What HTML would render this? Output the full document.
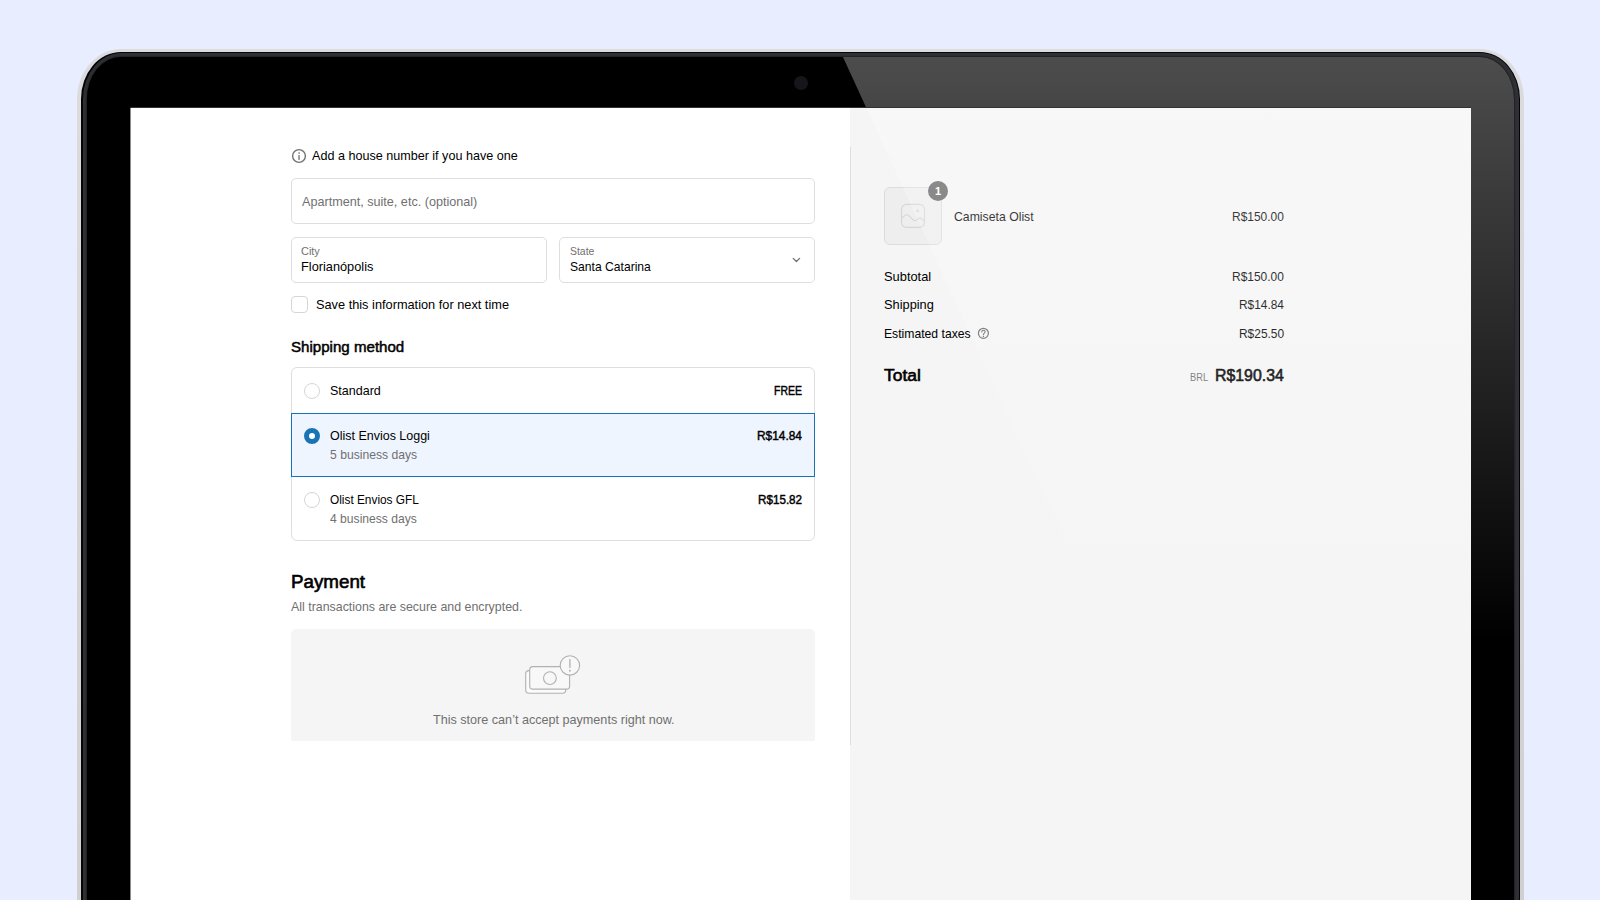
<!DOCTYPE html>
<html lang="en">
<head>
<meta charset="utf-8">
<title>Checkout</title>
<style>
*{box-sizing:border-box;margin:0;padding:0}
html,body{width:1600px;height:900px;overflow:hidden;background:#e8eeff;font-family:"Liberation Sans",sans-serif;color:#000}
.abs{position:absolute}
#laptop{position:absolute;left:77px;top:49px;width:1447px;height:900px;border-radius:44px 44px 0 0 / 50px 50px 0 0;background:linear-gradient(180deg,#dcdcde 0,#cfcfd2 100%);overflow:hidden}
#rim1{position:absolute;left:4px;top:3px;right:4px;bottom:-50px;border-radius:40px 40px 0 0 / 47px 47px 0 0;background:#050506}
#rim2{position:absolute;left:5.5px;top:4.2px;right:5.5px;bottom:-50px;border-radius:38.5px 38.5px 0 0 / 46px 46px 0 0;background:#2e3035}
#bezel{position:absolute;left:10px;top:8px;right:10px;bottom:-50px;border-radius:34px 34px 0 0 / 42px 42px 0 0;background:#000;box-shadow:0 0 2px 0 #000}
#cam{position:absolute;left:716.5px;top:27px;width:14px;height:14px;border-radius:50%;background:#15151a}
#screen{position:absolute;left:130px;top:107px;width:1341px;height:793px;background:#fff;overflow:hidden}
#side{position:absolute;left:720px;top:0;width:621px;height:793px;background:#f5f5f5}
#divider{position:absolute;left:720px;top:40px;width:1px;height:598px;background:#dedede}
.t{position:absolute;white-space:nowrap;line-height:1}

.fld{position:absolute;border:1px solid #dedede;border-radius:5px;background:#fff}
.g{color:#707070}
.b{font-weight:400;-webkit-text-stroke:0.45px currentColor}
.b2{-webkit-text-stroke:0.6px currentColor}
.radio{position:absolute;width:16px;height:16px;border-radius:50%;border:1px solid #d6d6d6;background:#fff}
</style>
</head>
<body>
<div id="laptop">
  <div id="rim1"></div><div id="rim2"></div><div id="bezel"></div>
  <div id="cam"></div>
</div>
<div id="screen">
  <div id="side"></div>
  <div class="abs" style="left:0;top:0;width:1341px;height:1px;background:rgba(0,0,0,.8);z-index:5"></div>
  <div class="abs" style="left:0;top:0;width:1px;height:793px;background:rgba(0,0,0,.45);z-index:5"></div>
  <div id="divider"></div>

  <!-- left column (coords relative to screen: x-130, y-107) -->
  <div class="t" id="t_add" style="left:182.05px;top:43.25px;font-size:12.7px;transform-origin:0 50%;transform:scaleX(0.9918)">Add a house number if you have one</div>
  <div class="fld" style="left:161px;top:71px;width:524px;height:46px"></div>
  <div class="t g" id="t_apt" style="left:171.88px;top:89.25px;font-size:12.7px;transform-origin:0 50%;transform:scaleX(0.9944)">Apartment, suite, etc. (optional)</div>
  <div class="fld" style="left:161px;top:130px;width:256px;height:46px"></div>
  <div class="t g" id="t_cityl" style="left:171.37px;top:139.03px;font-size:10.6px;transform-origin:0 50%;transform:scaleX(1.0305)">City</div>
  <div class="t" id="t_city" style="left:171.16px;top:154.25px;font-size:12.7px;transform-origin:0 50%;transform:scaleX(1.0060)">Florianópolis</div>
  <div class="fld" style="left:429px;top:130px;width:256px;height:46px"></div>
  <div class="t g" id="t_statel" style="left:439.88px;top:139.03px;font-size:10.6px;transform-origin:0 50%;transform:scaleX(0.9853)">State</div>
  <div class="t" id="t_state" style="left:439.50px;top:154.25px;font-size:12.7px;transform-origin:0 50%;transform:scaleX(0.9552)">Santa Catarina</div>
  <div class="abs" style="left:161px;top:189px;width:17px;height:17px;border:1px solid #d6d6d6;border-radius:4px;background:#fff"></div>
  <div class="t" id="t_save" style="left:186.06px;top:192.25px;font-size:12.7px;transform-origin:0 50%;transform:scaleX(1.0061)">Save this information for next time</div>

  <div class="t b" id="t_shipm" style="left:160.83px;top:234.32px;font-size:13.8px;transform-origin:0 50%;transform:scaleX(1.0937)">Shipping method</div>
  <div class="abs" style="left:161px;top:260px;width:524px;height:174px;border:1px solid #dedede;border-radius:6px;background:#fff"></div>
  <div class="abs" style="left:161px;top:306px;width:524px;height:64px;border:1px solid #1974b6;background:#eff5ff"></div>
  <div class="radio" style="left:174px;top:276px"></div>
  <div class="t" id="t_std" style="left:199.73px;top:278.25px;font-size:12.7px;transform-origin:0 50%;transform:scaleX(0.9866)">Standard</div>
  <div class="t b" id="t_free" style="left:644.31px;top:277.50px;font-size:12.4px;transform-origin:0 50%;transform:scaleX(0.8427)">FREE</div>
  <div class="radio" style="left:173.5px;top:320.5px;width:16.6px;height:16.6px;border:5px solid #1974b6"></div>
  <div class="t" id="t_loggi" style="left:200.13px;top:323.25px;font-size:12.7px;transform-origin:0 50%;transform:scaleX(0.9837)">Olist Envios Loggi</div>
  <div class="t g" id="t_5d" style="left:199.59px;top:342.25px;font-size:12.7px;transform-origin:0 50%;transform:scaleX(0.9583)">5 business days</div>
  <div class="t b" id="t_p1" style="left:626.84px;top:323.25px;font-size:12.7px;transform-origin:0 50%;transform:scaleX(0.9369)">R$14.84</div>
  <div class="radio" style="left:174px;top:385px"></div>
  <div class="t" id="t_gfl" style="left:200.19px;top:387.25px;font-size:12.7px;transform-origin:0 50%;transform:scaleX(0.9333)">Olist Envios GFL</div>
  <div class="t g" id="t_4d" style="left:199.97px;top:406.25px;font-size:12.7px;transform-origin:0 50%;transform:scaleX(0.9545)">4 business days</div>
  <div class="t b" id="t_p2" style="left:627.53px;top:387.25px;font-size:12.7px;transform-origin:0 50%;transform:scaleX(0.9191)">R$15.82</div>

  <div class="t b b2" id="t_pay" style="left:161.17px;top:466.85px;font-size:17.9px;transform-origin:0 50%;transform:scaleX(1.0484)">Payment</div>
  <div class="t g" id="t_all" style="left:160.91px;top:494.25px;font-size:12.7px;transform-origin:0 50%;transform:scaleX(0.9763)">All transactions are secure and encrypted.</div>
  <div class="abs" style="left:161px;top:522px;width:524px;height:112px;background:#f5f5f5;border-radius:5px 5px 2px 2px"></div>
  <div class="t g" id="t_cant" style="left:303.22px;top:607.25px;font-size:12.7px;transform-origin:0 50%;transform:scaleX(0.9931)">This store can’t accept payments right now.</div>


  <div class="abs" style="left:754px;top:80px;width:58px;height:58px;border:1px solid #dcdce0;border-radius:6px;background:#eee"></div>
  <!-- icon overlay in page coordinates -->
  <svg class="abs" style="left:-130px;top:-107px" width="1600" height="900" viewBox="0 0 1600 900" fill="none">
    <!-- info -->
    <circle cx="299" cy="156" r="6.4" stroke="#717171" stroke-width="1.4"/>
    <rect x="298.3" y="152.3" width="1.5" height="1.5" fill="#808080"/>
    <rect x="298.3" y="155.1" width="1.5" height="4.8" fill="#808080"/>
    <!-- chevron -->
    <path d="M793.2 258.4 L796.4 261.5 L799.6 258.4" stroke="#707070" stroke-width="1.3" stroke-linecap="round" stroke-linejoin="round"/>
    <!-- payment icon -->
    <g stroke="#b1b1b3" stroke-width="1.1">
      <rect x="525.7" y="670.6" width="40" height="22.7" rx="3.2" fill="#fbfbfb"/>
      <rect x="529.7" y="666.6" width="39.9" height="22.5" rx="3.2" fill="#f8f8f8"/>
      <circle cx="549.9" cy="678.1" r="6.4" fill="#f7f7f7"/>
      <circle cx="569.9" cy="665.4" r="9.7" fill="#f8f8f8"/>
      <path d="M569.9 659.6V667.6" stroke-width="1.3" stroke-linecap="round"/>
    </g>
    <circle cx="569.9" cy="670.7" r="0.95" fill="#b1b1b3"/>
    <!-- thumbnail image icon -->
    <g stroke="#d6d6da" stroke-width="1.1">
      <rect x="901.5" y="204.4" width="23" height="23" rx="5"/>
      <path d="M901.6 218.4 C903.5 216.3 905.3 214.7 906.9 214.7 C909.6 214.7 912 220.6 914.7 220.6 C916.8 220.6 918.2 218.1 920.2 218.1 C921.8 218.1 923.2 220 924.4 221.9"/>
    </g>
    <circle cx="917.6" cy="210.9" r="1.4" fill="#d6d6da"/>
    <!-- question icon -->
    <circle cx="983.4" cy="333.3" r="5" stroke="#6a6a6a" stroke-width="1.2"/>
    <path d="M981.8 331.9 C981.8 330.9 982.5 330.3 983.4 330.3 C984.4 330.3 985.1 330.9 985.1 331.8 C985.1 333.1 983.4 333.1 983.4 334.7" stroke="#6a6a6a" stroke-width="1.1" stroke-linecap="round"/>
    <circle cx="983.4" cy="336.4" r="0.7" fill="#6a6a6a"/>
  </svg>
  <!-- right column -->
  <div class="abs" style="left:798px;top:74px;width:20px;height:20px;border-radius:50%;background:#666;color:#fff;font-size:11px;font-weight:700;text-align:center;line-height:20px">1</div>
  <div class="t" id="t_cam" style="left:823.94px;top:104.25px;font-size:12.7px;transform-origin:0 50%;transform:scaleX(0.9654)">Camiseta Olist</div>
  <div class="t" id="t_r1" style="left:1102.47px;top:104.25px;font-size:12.7px;transform-origin:0 50%;transform:scaleX(0.9422)">R$150.00</div>
  <div class="t" id="t_sub" style="left:753.88px;top:164.25px;font-size:12.7px;transform-origin:0 50%;transform:scaleX(1.0136)">Subtotal</div>
  <div class="t" id="t_r2" style="left:1102.47px;top:164.25px;font-size:12.7px;transform-origin:0 50%;transform:scaleX(0.9421)">R$150.00</div>
  <div class="t" id="t_shp" style="left:753.88px;top:192.25px;font-size:12.7px;transform-origin:0 50%;transform:scaleX(1.0092)">Shipping</div>
  <div class="t" id="t_r3" style="left:1108.98px;top:192.25px;font-size:12.7px;transform-origin:0 50%;transform:scaleX(0.9374)">R$14.84</div>
  <div class="t" id="t_tax" style="left:753.55px;top:221.25px;font-size:12.7px;transform-origin:0 50%;transform:scaleX(0.9598)">Estimated taxes</div>
  <div class="t" id="t_r4" style="left:1108.99px;top:221.25px;font-size:12.7px;transform-origin:0 50%;transform:scaleX(0.9402)">R$25.50</div>
  <div class="t b b2" id="t_tot" style="left:754.17px;top:260.29px;font-size:16.2px;transform-origin:0 50%;transform:scaleX(1.0758)">Total</div>
  <div class="t g" id="t_brl" style="left:1060.15px;top:266.45px;font-size:10.1px;transform-origin:0 50%;transform:scaleX(0.9211)">BRL</div>
  <div class="t b b2" id="t_r5" style="left:1084.69px;top:260.12px;font-size:16.4px;transform-origin:0 50%;transform:scaleX(0.9682)">R$190.34</div>
</div>
<svg id="glare" class="abs" style="left:0;top:0" width="1600" height="900" viewBox="0 0 1600 900">
  <defs>
    <linearGradient id="gl" x1="0" y1="57" x2="0" y2="640" gradientUnits="userSpaceOnUse">
      <stop offset="0" stop-color="#fff" stop-opacity="0.30"/>
      <stop offset="1" stop-color="#fff" stop-opacity="0"/>
    </linearGradient>
    <clipPath id="gc"><rect x="87" y="57" width="1427" height="900" rx="34" ry="42"/></clipPath>
  </defs>
  <g clip-path="url(#gc)">
    <path d="M842.5 56 L1600 56 L1600 900 L1230 900 Z" fill="url(#gl)"/>
  </g>
</svg>
</body>
</html>
